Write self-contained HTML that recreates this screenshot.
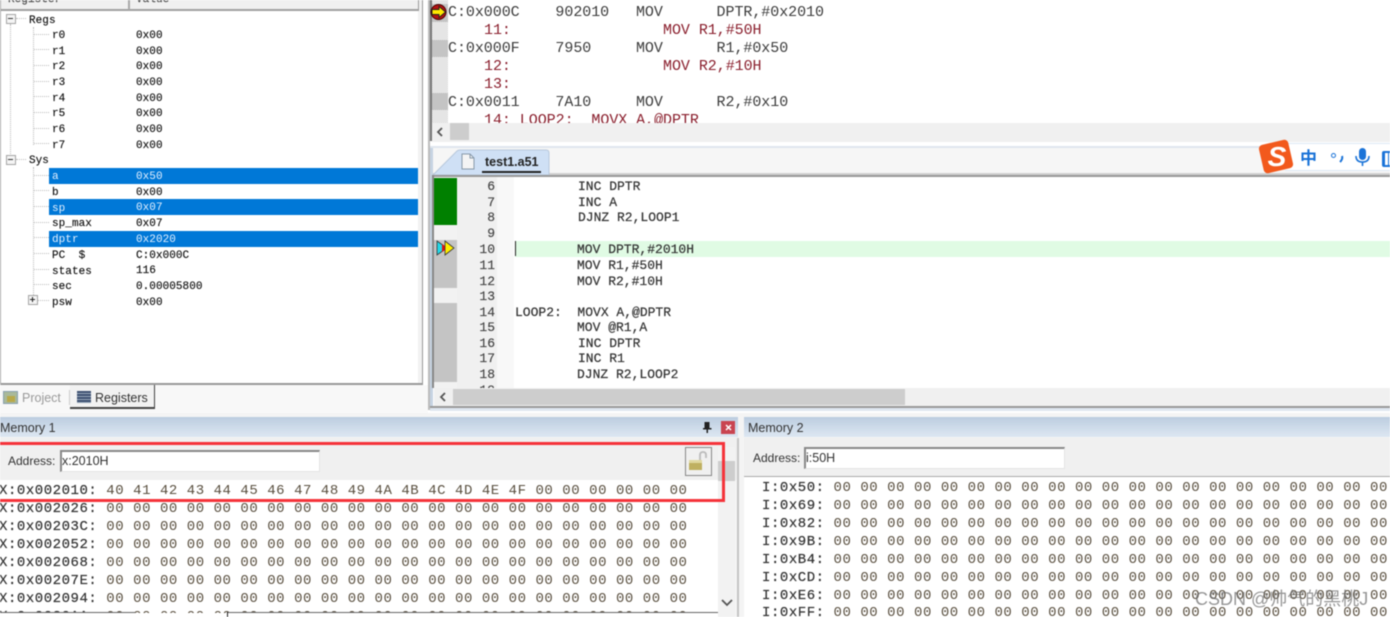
<!DOCTYPE html>
<html><head><meta charset="utf-8">
<style>
html,body{margin:0;padding:0;background:#fff}
#p{position:relative;width:1390px;height:617px;overflow:hidden;background:#fff;font-family:"Liberation Mono",monospace;color:#333;filter:blur(.5px)}
#p div,#p span.t{position:absolute}
.b{display:block}
.t{white-space:pre;line-height:16px}
.r{font-size:11px;letter-spacing:.05px;color:#111;-webkit-text-stroke:.15px #111;margin-top:1px}
.w{color:#e4f0ff!important;-webkit-text-stroke:0!important}
.c{font-size:13px;color:#333;-webkit-text-stroke:.2px #333;margin-top:1px}
.n{font-size:13px;color:#444;width:30px;text-align:right;left:465px;margin-top:1px;-webkit-text-stroke:.15px #444}
.a{font-size:15px;color:#3c3c3c;letter-spacing:-.05px;margin-top:1px}
.d{font-size:15px;color:#8a1f2d;letter-spacing:-.05px;margin-top:1px}
.m{font-size:14px;letter-spacing:.54px;color:#5a5040;margin-top:1px}
.ml{color:#333;-webkit-text-stroke:.2px #333}
.s{font-family:"Liberation Sans",sans-serif;font-size:12.5px;color:#333}
.dot{border-top:1px dotted #bbb;height:0}
</style></head><body><div id="p">

<!-- left panel -->
<div style="left:0;top:0;width:423px;height:385px;background:#f2f2f2;border-right:1px solid #999;border-bottom:2px solid #999;box-sizing:border-box"></div>
<div style="left:0;top:0;width:418px;height:9px;background:#f0f0f0;border-bottom:2px solid #a0a0a0;border-right:1px solid #999"></div>
<div style="left:128px;top:0;width:2px;height:10px;background:#a8a8a8"></div>
<span class="t r" style="left:8px;top:-9px;color:#555">Register</span>
<span class="t r" style="left:136px;top:-9px;color:#555">Value</span>
<div style="left:1px;top:11px;width:417px;height:372px;background:#fff"></div>
<div style="left:0;top:0;width:1px;height:385px;background:#aaa"></div>
<div style="left:428px;top:0;width:2px;height:410px;background:#bbb"></div>

<!-- selected bars -->
<div style="left:49px;top:168px;width:369px;height:16px;background:#0078d7"></div>
<div style="left:49px;top:199px;width:369px;height:16px;background:#0078d7"></div>
<div style="left:49px;top:231px;width:369px;height:16px;background:#0078d7"></div>

<!-- tree lines -->
<div style="left:10px;top:24px;width:0;height:130px;border-left:1px dotted #bbb"></div>
<div style="left:33px;top:27px;width:0;height:118px;border-left:1px dotted #bbb"></div>
<div style="left:33px;top:167px;width:0;height:130px;border-left:1px dotted #bbb"></div>
<div class="dot" style="left:16px;top:18px;width:10px"></div>
<div class="dot" style="left:16px;top:159px;width:10px"></div>
<div class="dot" style="left:34px;top:34px;width:15px"></div>
<div class="dot" style="left:34px;top:49px;width:15px"></div>
<div class="dot" style="left:34px;top:65px;width:15px"></div>
<div class="dot" style="left:34px;top:81px;width:15px"></div>
<div class="dot" style="left:34px;top:96px;width:15px"></div>
<div class="dot" style="left:34px;top:112px;width:15px"></div>
<div class="dot" style="left:34px;top:128px;width:15px"></div>
<div class="dot" style="left:34px;top:143px;width:15px"></div>
<div class="dot" style="left:34px;top:175px;width:15px"></div>
<div class="dot" style="left:34px;top:190px;width:15px"></div>
<div class="dot" style="left:34px;top:206px;width:15px"></div>
<div class="dot" style="left:34px;top:222px;width:15px"></div>
<div class="dot" style="left:34px;top:237px;width:15px"></div>
<div class="dot" style="left:34px;top:253px;width:15px"></div>
<div class="dot" style="left:34px;top:269px;width:15px"></div>
<div class="dot" style="left:34px;top:284px;width:15px"></div>
<div class="dot" style="left:38px;top:300px;width:11px"></div>
<!-- expanders -->
<div style="left:6px;top:14px;width:8px;height:8px;border:1px solid #a5a5a5;background:#f4f4f4"></div><div style="left:8px;top:18px;width:5px;height:1px;background:#333"></div>
<div style="left:6px;top:155px;width:8px;height:8px;border:1px solid #a5a5a5;background:#f4f4f4"></div><div style="left:8px;top:159px;width:5px;height:1px;background:#333"></div>
<div style="left:28px;top:295px;width:8px;height:8px;border:1px solid #a5a5a5;background:#f4f4f4"></div><div style="left:30px;top:299px;width:5px;height:1px;background:#222"></div><div style="left:32px;top:297px;width:1px;height:5px;background:#222"></div>

<span class="t r" style="left:29px;top:12px">Regs</span>
<span class="t r" style="left:52px;top:27px">r0</span><span class="t r" style="left:136px;top:27px">0x00</span>
<span class="t r" style="left:52px;top:43px">r1</span><span class="t r" style="left:136px;top:43px">0x00</span>
<span class="t r" style="left:52px;top:58px">r2</span><span class="t r" style="left:136px;top:58px">0x00</span>
<span class="t r" style="left:52px;top:74px">r3</span><span class="t r" style="left:136px;top:74px">0x00</span>
<span class="t r" style="left:52px;top:90px">r4</span><span class="t r" style="left:136px;top:90px">0x00</span>
<span class="t r" style="left:52px;top:105px">r5</span><span class="t r" style="left:136px;top:105px">0x00</span>
<span class="t r" style="left:52px;top:121px">r6</span><span class="t r" style="left:136px;top:121px">0x00</span>
<span class="t r" style="left:52px;top:137px">r7</span><span class="t r" style="left:136px;top:137px">0x00</span>
<span class="t r" style="left:29px;top:152px">Sys</span>
<span class="t r w" style="left:52px;top:168px">a</span><span class="t r w" style="left:136px;top:168px">0x50</span>
<span class="t r" style="left:52px;top:184px">b</span><span class="t r" style="left:136px;top:184px">0x00</span>
<span class="t r w" style="left:52px;top:200px">sp</span><span class="t r w" style="left:136px;top:199px">0x07</span>
<span class="t r" style="left:52px;top:215px">sp_max</span><span class="t r" style="left:136px;top:215px">0x07</span>
<span class="t r w" style="left:52px;top:231px">dptr</span><span class="t r w" style="left:136px;top:231px">0x2020</span>
<span class="t r" style="left:52px;top:247px">PC  $</span><span class="t r" style="left:136px;top:247px">C:0x000C</span>
<span class="t r" style="left:52px;top:263px">states</span><span class="t r" style="left:136px;top:262px">116</span>
<span class="t r" style="left:52px;top:278px">sec</span><span class="t r" style="left:136px;top:278px">0.00005800</span>
<span class="t r" style="left:52px;top:294px">psw</span><span class="t r" style="left:136px;top:294px">0x00</span>

<!-- tabs -->
<div style="left:0;top:385px;width:428px;height:28px;background:#f8f8f8"></div>
<div style="left:70px;top:385px;width:85px;height:24px;background:#f2f2f2;border-right:1px solid #444;border-bottom:2px solid #444;box-sizing:border-box"></div>
<div style="left:3px;top:391px;width:15px;height:13px;background:#a9b99a;border:1px solid #8aa0b0;box-sizing:border-box"></div>
<div style="left:7px;top:396px;width:8px;height:6px;background:#b8a94a"></div>
<span class="t" style="left:22px;top:390px;font:12.5px/16px 'Liberation Sans',sans-serif;color:#9a9a9a">Project</span>
<div style="left:69px;top:390px;width:1px;height:15px;background:#ccc"></div>
<div style="left:77px;top:391px;width:14px;height:12px;background:repeating-linear-gradient(#3d4f70 0 2px,#9ab 2px 3px)"></div>
<span class="t" style="left:95px;top:390px;font:12.5px/16px 'Liberation Sans',sans-serif;color:#333">Registers</span>

<!-- top code panel -->
<div style="left:430px;top:0;width:2px;height:141px;background:#777"></div>
<div style="left:432px;top:0;width:16px;height:123px;background:repeating-conic-gradient(#d8d8d8 0 25%,#f2f2f2 0 50%) 0 0/2px 2px"></div>
<div style="left:432px;top:40px;width:16px;height:17px;background:#c4c4c4"></div>
<div style="left:432px;top:93px;width:16px;height:17px;background:#c4c4c4"></div>
<div style="left:432px;top:4px;width:16px;height:18px;background:#c4c4c4"></div>
<svg class="b" style="position:absolute;left:430px;top:3px" width="18" height="18" viewBox="0 0 18 18"><circle cx="8.5" cy="9" r="7.5" fill="#b31313" stroke="#400" stroke-width="1"/><path d="M2 6.500h7V3.500l6.500 5.500L9 14.500V11.500H2z" fill="#ffe800" stroke="#222" stroke-width=".9"/></svg>

<span class="t a" style="left:448px;top:4px">C:0x000C    902010   MOV      DPTR,#0x2010</span>
<span class="t d" style="left:484px;top:22px">11:                 MOV R1,#50H</span>
<span class="t a" style="left:448px;top:40px">C:0x000F    7950     MOV      R1,#0x50</span>
<span class="t d" style="left:484px;top:58px">12:                 MOV R2,#10H</span>
<span class="t d" style="left:484px;top:76px">13:</span>
<span class="t a" style="left:448px;top:94px">C:0x0011    7A10     MOV      R2,#0x10</span>
<span class="t d" style="left:484px;top:112px">14: LOOP2:  MOVX A,@DPTR</span>
<div style="left:432px;top:123px;width:958px;height:19px;background:#f0f0f0"></div>
<div style="left:450px;top:123px;width:19px;height:17px;background:#cdcdcd"></div>
<svg class="b" style="position:absolute;left:436px;top:127px" width="8" height="10"><path d="M6 1L2 5l4 4" fill="none" stroke="#555" stroke-width="1.800"/></svg>

<!-- file tab bar -->
<div style="left:430px;top:146px;width:960px;height:2px;background:#dfe6ee"></div>
<div style="left:430px;top:148px;width:960px;height:27px;background:#f6f6f6"></div>
<div style="left:430px;top:148px;width:3px;height:262px;background:#c6d3e2"></div>
<div style="left:433px;top:173px;width:957px;height:2px;background:#d0d0d0"></div>
<svg class="b" style="position:absolute;left:433px;top:149px" width="118" height="27"><path d="M0 26L24 2q1-1 3-1h86q3 0 3 3v22z" fill="#cfe0f5" stroke="#b8c8dc"/></svg>
<svg class="b" style="position:absolute;left:461px;top:153px" width="14" height="17"><path d="M1 1h8l4 4v11H1z" fill="#f4f4f4" stroke="#8899aa"/><path d="M9 1v4h4" fill="none" stroke="#8899aa"/></svg>
<span class="t" style="left:485px;top:154px;font:bold 12.5px/16px 'Liberation Sans',sans-serif;color:#222">test1.a51</span>
<div style="left:482px;top:171px;width:59px;height:2px;background:#222"></div>

<!-- bottom code panel -->
<div style="left:433px;top:175px;width:957px;height:2px;background:#999"></div>
<div style="left:432px;top:175px;width:2px;height:213px;background:#888"></div>
<div style="left:434px;top:177px;width:956px;height:211px;background:#fff"></div>
<div style="left:434px;top:177px;width:23px;height:211px;background:#f2f2f2"></div>
<div style="left:457px;top:177px;width:40px;height:211px;background:#f0f0f0"></div>
<div style="left:497px;top:177px;width:17px;height:211px;background:#f8f8f8"></div>
<div style="left:434px;top:178px;width:23px;height:47px;background:#008000"></div>
<div style="left:434px;top:240px;width:23px;height:48px;background:#c4c4c4"></div>
<div style="left:434px;top:303px;width:23px;height:79px;background:#c4c4c4"></div>
<div style="left:515px;top:241px;width:875px;height:16px;background:#e0fbe4"></div>
<div style="left:515px;top:241px;width:1px;height:15px;background:#222"></div>
<svg class="b" style="position:absolute;left:436px;top:240px" width="20" height="16"><path d="M1 1l10 7L1 15z" fill="#22d8e8" stroke="#333" stroke-width=".8"/><path d="M6 4l6 4-6 4z" fill="#e01010"/><path d="M9 1l9 7-9 7z" fill="#ffee00" stroke="#333" stroke-width=".8"/></svg>

<span class="t n" style="top:178px">6</span><span class="t c" style="left:578px;top:178px">INC DPTR</span>
<span class="t n" style="top:194px">7</span><span class="t c" style="left:578px;top:194px">INC A</span>
<span class="t n" style="top:209px">8</span><span class="t c" style="left:578px;top:209px">DJNZ R2,LOOP1</span>
<span class="t n" style="top:225px">9</span>
<span class="t n" style="top:241px">10</span><span class="t c" style="left:577px;top:241px">MOV DPTR,#2010H</span>
<span class="t n" style="top:257px">11</span><span class="t c" style="left:577px;top:257px">MOV R1,#50H</span>
<span class="t n" style="top:273px">12</span><span class="t c" style="left:577px;top:273px">MOV R2,#10H</span>
<span class="t n" style="top:288px">13</span>
<span class="t n" style="top:304px">14</span><span class="t c" style="left:515px;top:304px">LOOP2:  MOVX A,@DPTR</span>
<span class="t n" style="top:319px">15</span><span class="t c" style="left:577px;top:319px">MOV @R1,A</span>
<span class="t n" style="top:335px">16</span><span class="t c" style="left:578px;top:335px">INC DPTR</span>
<span class="t n" style="top:350px">17</span><span class="t c" style="left:578px;top:350px">INC R1</span>
<span class="t n" style="top:366px">18</span><span class="t c" style="left:577px;top:366px">DJNZ R2,LOOP2</span>
<span class="t n" style="top:382px">19</span>
<div style="left:434px;top:388px;width:956px;height:18px;background:#f0f0f0"></div>
<div style="left:453px;top:389px;width:452px;height:16px;background:#cdcdcd"></div>
<svg class="b" style="position:absolute;left:439px;top:392px" width="8" height="10"><path d="M6 1L2 5l4 4" fill="none" stroke="#555" stroke-width="1.800"/></svg>
<div style="left:430px;top:406px;width:960px;height:2px;background:#999"></div>
<div style="left:430px;top:408px;width:960px;height:3px;background:#dfe7f0"></div>

<!-- bottom panels -->
<div style="left:0;top:413px;width:1390px;height:204px;background:#f4f4f4"></div>
<div style="left:0;top:417px;width:738px;height:20px;background:linear-gradient(#bccde0,#dde7f2)"></div>
<div style="left:744px;top:417px;width:646px;height:20px;background:linear-gradient(#bccde0,#dde7f2)"></div>
<span class="t s" style="left:0;top:420px">Memory 1</span>
<span class="t s" style="left:748px;top:420px">Memory 2</span>
<svg class="b" style="position:absolute;left:702px;top:421px" width="10" height="12"><path d="M2.500 1h5v6h2v1.500h-3.500V12H4.500V8.500H1V7h1.500z" fill="#222"/></svg>
<div style="left:721px;top:421px;width:14px;height:13px;background:#c94450"></div>
<svg class="b" style="position:absolute;left:725px;top:424px" width="7" height="7"><path d="M1 1l5 5M6 1L1 6" stroke="#fff" stroke-width="1.500"/></svg>

<!-- memory 1 -->
<div style="left:0;top:438px;width:738px;height:42px;background:#f0f0f0"></div>
<div style="left:0;top:480px;width:718px;height:137px;background:#fff"></div>
<div style="left:718px;top:447px;width:17px;height:170px;background:#f2f2f2"></div>
<div style="left:737px;top:438px;width:2px;height:179px;background:#c4c4c4"></div>
<div style="left:718px;top:461px;width:17px;height:20px;background:#cdcdcd"></div>
<span class="t s" style="left:8px;top:453px;font-size:12px">Address:</span>
<div style="left:60px;top:450px;width:260px;height:22px;background:#fff;border-top:2px solid #888;border-left:2px solid #888;border-right:1px solid #e4e4e4;border-bottom:1px solid #e4e4e4;box-sizing:border-box"></div>
<span class="t s" style="left:62px;top:453px">x:2010H</span>
<div style="left:685px;top:447px;width:25px;height:27px;border:1px solid #888;background:#f0f0f0"></div>
<svg class="b" style="position:absolute;left:688px;top:450px" width="22" height="22"><path d="M12 10V5q0-3 3-3t3 3v3" fill="none" stroke="#bbb" stroke-width="1.800"/><rect x="1" y="10" width="13" height="10" fill="#bfb060"/><rect x="1" y="10" width="13" height="3" fill="#e0d8a0"/></svg>
<svg class="b" style="position:absolute;left:721px;top:598px" width="12" height="9"><path d="M1 2l5 5 5-5" fill="none" stroke="#555" stroke-width="1.800"/></svg>

<span class="t m" style="left:-1px;top:482px"><span class="ml">X:0x002010:</span> 40 41 42 43 44 45 46 47 48 49 4A 4B 4C 4D 4E 4F 00 00 00 00 00 00</span>
<span class="t m" style="left:-1px;top:500px"><span class="ml">X:0x002026:</span> 00 00 00 00 00 00 00 00 00 00 00 00 00 00 00 00 00 00 00 00 00 00</span>
<span class="t m" style="left:-1px;top:518px"><span class="ml">X:0x00203C:</span> 00 00 00 00 00 00 00 00 00 00 00 00 00 00 00 00 00 00 00 00 00 00</span>
<span class="t m" style="left:-1px;top:536px"><span class="ml">X:0x002052:</span> 00 00 00 00 00 00 00 00 00 00 00 00 00 00 00 00 00 00 00 00 00 00</span>
<span class="t m" style="left:-1px;top:554px"><span class="ml">X:0x002068:</span> 00 00 00 00 00 00 00 00 00 00 00 00 00 00 00 00 00 00 00 00 00 00</span>
<span class="t m" style="left:-1px;top:572px"><span class="ml">X:0x00207E:</span> 00 00 00 00 00 00 00 00 00 00 00 00 00 00 00 00 00 00 00 00 00 00</span>
<span class="t m" style="left:-1px;top:590px"><span class="ml">X:0x002094:</span> 00 00 00 00 00 00 00 00 00 00 00 00 00 00 00 00 00 00 00 00 00 00</span>
<span class="t m" style="left:-1px;top:608px"><span class="ml">X:0x0020AA:</span> 00 00 00 00 00 00 00 00 00 00 00 00 00 00 00 00 00 00 00 00 00 00</span>
<div style="left:0;top:613px;width:718px;height:4px;background:#fff"></div>
<div style="left:0;top:612px;width:135px;height:1px;background:#666"></div>
<div style="left:227px;top:612px;width:491px;height:1px;background:#666"></div>
<div style="left:227px;top:612px;width:1px;height:5px;background:#222"></div>

<!-- red box -->
<div style="left:-6px;top:442px;width:731px;height:60px;border:3px solid #f5333a;box-sizing:border-box"></div>

<!-- memory 2 -->
<div style="left:744px;top:438px;width:646px;height:39px;background:#f0f0f0"></div>
<div style="left:744px;top:476px;width:646px;height:1px;background:#aaa"></div>
<div style="left:744px;top:477px;width:646px;height:140px;background:#fff"></div>
<span class="t s" style="left:753px;top:450px;font-size:12px">Address:</span>
<div style="left:804px;top:447px;width:261px;height:22px;background:#fff;border-top:2px solid #888;border-left:2px solid #888;border-right:1px solid #e4e4e4;border-bottom:1px solid #e4e4e4;box-sizing:border-box"></div>
<span class="t s" style="left:806px;top:450px">i:50H</span>

<span class="t m" style="left:762px;top:479px"><span class="ml">I:0x50:</span> 00 00 00 00 00 00 00 00 00 00 00 00 00 00 00 00 00 00 00 00 00</span>
<span class="t m" style="left:762px;top:497px"><span class="ml">I:0x69:</span> 00 00 00 00 00 00 00 00 00 00 00 00 00 00 00 00 00 00 00 00 00</span>
<span class="t m" style="left:762px;top:515px"><span class="ml">I:0x82:</span> 00 00 00 00 00 00 00 00 00 00 00 00 00 00 00 00 00 00 00 00 00</span>
<span class="t m" style="left:762px;top:533px"><span class="ml">I:0x9B:</span> 00 00 00 00 00 00 00 00 00 00 00 00 00 00 00 00 00 00 00 00 00</span>
<span class="t m" style="left:762px;top:551px"><span class="ml">I:0xB4:</span> 00 00 00 00 00 00 00 00 00 00 00 00 00 00 00 00 00 00 00 00 00</span>
<span class="t m" style="left:762px;top:569px"><span class="ml">I:0xCD:</span> 00 00 00 00 00 00 00 00 00 00 00 00 00 00 00 00 00 00 00 00 00</span>
<span class="t m" style="left:762px;top:587px"><span class="ml">I:0xE6:</span> 00 00 00 00 00 00 00 00 00 00 00 00 00 00 00 00 00 00 00 00 00</span>
<span class="t m" style="left:762px;top:604px"><span class="ml">I:0xFF:</span> 00 00 00 00 00 00 00 00 00 00 00 00 00 00 00 00 00 00 00 00 00</span>

<!-- sogou IME -->
<div style="left:1285px;top:143px;width:105px;height:28px;background:#fff;border-top:1px solid #dde8f5;border-bottom:1px solid #dde8f5;box-sizing:border-box"></div>
<div style="left:1261px;top:142px;width:30px;height:29px;background:#f2591c;border-radius:4px;transform:rotate(-13deg)"></div>
<span class="t" style="left:1263px;top:145px;width:28px;text-align:center;font:italic bold 28px/24px 'Liberation Sans',sans-serif;color:#fff">S</span>
<span class="t" style="left:1300px;top:148px;font:bold 17px/18px 'Noto Sans CJK SC',sans-serif;color:#1a73d8">中</span>
<div style="left:1331px;top:153px;width:3px;height:3px;border:1px solid #1a73d8;border-radius:50%"></div>
<svg class="b" style="position:absolute;left:1338px;top:155px" width="6" height="8"><path d="M4 1q1 3-2 6" fill="none" stroke="#1a73d8" stroke-width="2"/></svg>
<svg class="b" style="position:absolute;left:1355px;top:148px" width="15" height="19"><rect x="4" y="0" width="7" height="12" rx="3.500" fill="#1a73d8"/><path d="M1 8q0 6 6.500 6T14 8M7.500 14v4" fill="none" stroke="#1a73d8" stroke-width="1.600"/></svg>
<div style="left:1382px;top:151px;width:12px;height:12px;border:2px solid #1a73d8;border-radius:2px;background:repeating-linear-gradient(90deg,#1a73d8 0 1px,#fff 1px 4px)"></div>

<!-- watermark -->
<span class="t" style="left:1195px;top:589px;font:18px/20px 'Liberation Sans','Noto Sans CJK SC',sans-serif;color:rgba(110,110,110,.72)">CSDN @帅气的黑桃J</span>
</div></body></html>
